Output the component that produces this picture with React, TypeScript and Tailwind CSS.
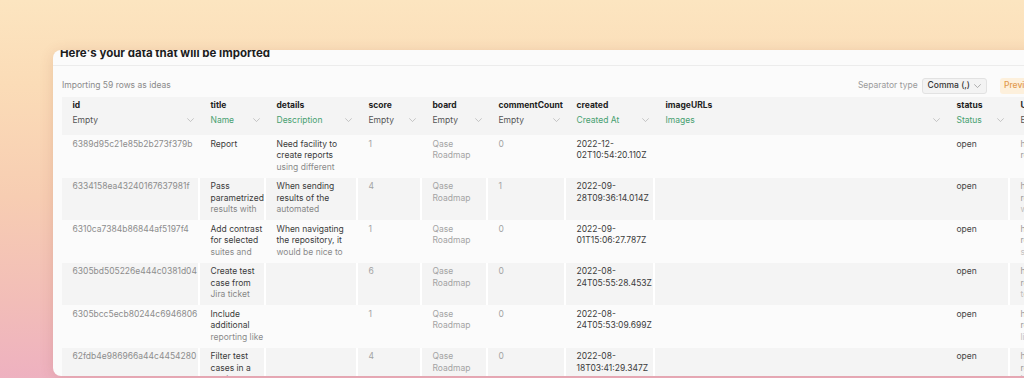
import { type ReactNode } from 'react'

type Column = {
  head: string
  value: string
  mapped: boolean
  width: string
  tone: string
  noSep?: boolean
}

const COLUMNS: Column[] = [
  { head: 'id', value: 'Empty', mapped: false, width: 'w-[138px]', tone: 'text-[#8d8d8d]' },
  { head: 'title', value: 'Name', mapped: true, width: 'w-[66px]', tone: 'text-[#3b3b3b]' },
  { head: 'details', value: 'Description', mapped: true, width: 'w-[92px]', tone: 'text-[#3b3b3b]' },
  { head: 'score', value: 'Empty', mapped: false, width: 'w-[64px]', tone: 'text-[#a3a3a3]' },
  { head: 'board', value: 'Empty', mapped: false, width: 'w-[66px]', tone: 'text-[#a3a3a3]' },
  { head: 'commentCount', value: 'Empty', mapped: false, width: 'w-[78px]', tone: 'text-[#a3a3a3]' },
  { head: 'created', value: 'Created At', mapped: true, width: 'w-[89px]', tone: 'text-[#3b3b3b]' },
  { head: 'imageURLs', value: 'Images', mapped: true, width: 'w-[291px]', tone: 'text-[#3b3b3b]', noSep: true },
  { head: 'status', value: 'Status', mapped: true, width: 'w-[64px]', tone: 'text-[#444444]' },
  { head: 'URL', value: 'Empty', mapped: false, width: 'w-[150px]', tone: 'text-[#9a9a9a]' },
]

// each cell is a list of visual lines
const ROWS: string[][][] = [
  [
    ['6389d95c21e85b2b273f379b'],
    ['Report'],
    ['Need facility to', 'create reports', 'using different'],
    ['1'],
    ['Qase', 'Roadmap'],
    ['0'],
    ['2022-12-', '02T10:54:20.110Z'],
    [],
    ['open'],
    ['https://qase.io/', 'roadmap/report'],
  ],
  [
    ['6334158ea43240167637981f'],
    ['Pass', 'parametrized', 'results with'],
    ['When sending', 'results of the', 'automated'],
    ['4'],
    ['Qase', 'Roadmap'],
    ['1'],
    ['2022-09-', '28T09:36:14.014Z'],
    [],
    ['open'],
    ['https://qase.io/', 'roadmap/pass-', 'with-values'],
  ],
  [
    ['6310ca7384b86844af5197f4'],
    ['Add contrast', 'for selected', 'suites and'],
    ['When navigating', 'the repository, it', 'would be nice to'],
    ['1'],
    ['Qase', 'Roadmap'],
    ['0'],
    ['2022-09-', '01T15:06:27.787Z'],
    [],
    ['open'],
    ['https://qase.io/', 'roadmap/add-', 'suites-and'],
  ],
  [
    ['6305bd505226e444c0381d04'],
    ['Create test', 'case from', 'Jira ticket'],
    [],
    ['6'],
    ['Qase', 'Roadmap'],
    ['0'],
    ['2022-08-', '24T05:55:28.453Z'],
    [],
    ['open'],
    ['https://qase.io/', 'roadmap/create-', 'test-case'],
  ],
  [
    ['6305bcc5ecb80244c6946806'],
    ['Include', 'additional', 'reporting like'],
    [],
    ['1'],
    ['Qase', 'Roadmap'],
    ['0'],
    ['2022-08-', '24T05:53:09.699Z'],
    [],
    ['open'],
    ['https://qase.io/', 'roadmap/include-', 'like-more'],
  ],
  [
    ['62fdb4e986966a44c4454280'],
    ['Filter test', 'cases in a', 'run by'],
    [],
    ['4'],
    ['Qase', 'Roadmap'],
    ['0'],
    ['2022-08-', '18T03:41:29.347Z'],
    [],
    ['open'],
    ['https://qase.io/', 'roadmap/filter-', 'by-status'],
  ],
]

function Chevron({ className = '' }: { className?: string }) {
  return (
    <svg viewBox="0 0 8 5" className={`h-[4.5px] w-[7px] shrink-0 ${className}`} fill="none" aria-hidden="true">
      <path d="M0.6 0.6L4 4L7.4 0.6" stroke="currentColor" strokeWidth="0.9" strokeLinecap="round" strokeLinejoin="round" />
    </svg>
  )
}

function HeaderCell({ col }: { col: Column }) {
  return (
    <div className={`${col.width} shrink-0 pt-[2.75px] pr-[6px] pl-[10.5px]`}>
      <p className="h-[11.5px] font-bold whitespace-nowrap text-[#222222]">{col.head}</p>
      <div className="mt-[3.5px] flex h-[11.5px] items-center justify-between">
        <span className={`whitespace-nowrap ${col.mapped ? 'text-[#47a071]' : 'text-[#555555]'}`}>{col.value}</span>
        <Chevron className="text-[#b8b8b8]" />
      </div>
    </div>
  )
}

function BodyCell({ col, lines, striped }: { col: Column; lines: string[]; striped: boolean }) {
  const sep = striped && !col.noSep ? 'border-white' : 'border-transparent'
  return (
    <div className={`${col.width} h-full shrink-0 overflow-hidden border-r-2 ${sep} pt-[3.5px] pr-[3px] pl-[10.5px] ${col.tone}`}>
      {lines.map((line, i) => (
        <p key={i} className={`whitespace-nowrap ${i === 2 ? 'opacity-60' : ''}`}>
          {line}
        </p>
      ))}
    </div>
  )
}

function Row({ cells, striped }: { cells: string[][]; striped: boolean }): ReactNode {
  return (
    <div className={`flex h-[42.6px] ${striped ? 'bg-[#f4f4f4]' : ''}`}>
      {COLUMNS.map((col, i) => (
        <BodyCell key={col.head} col={col} lines={cells[i]} striped={striped} />
      ))}
    </div>
  )
}

export default function App() {
  return (
    <div className="h-[378px] w-[1024px] overflow-hidden bg-[linear-gradient(180deg,#fce5c0_0%,#fbdcb7_22%,#f7cdb2_52%,#f2bdb8_80%,#eeb1c0_100%)] pt-[50px] pl-[53px] font-['Inter','Noto_Sans',sans-serif]">
      <div className="h-[326px] w-[1120px] overflow-hidden rounded-lg bg-[#fbfbfb] shadow-[0_2px_14px_rgba(140,70,50,0.16)]">
        <div className="flex h-[15.5px] items-start border-b border-[#ececec] pl-[7px]">
          <h2 className="-mt-[5px] text-[11.5px] leading-[16px] font-bold whitespace-nowrap text-[#1d1d1d]">
            Here's your data that will be imported
          </h2>
        </div>

        <div className="pt-[12.5px] pl-[9px] text-[8.5px] leading-[11.5px]">
          <div className="flex h-[16px] w-[998px] items-center">
            <span className="text-[#8a8a8a]">Importing 59 rows as ideas</span>
            <div className="ml-auto flex items-center">
              <span className="text-[#9a9a9a]">Separator type</span>
              <div className="ml-[4px] flex h-[15.5px] items-center gap-[4px] rounded-[3px] border border-[#e2e2e2] bg-[#f3f3f3] pr-[5px] pl-[5px]">
                <span className="font-medium whitespace-nowrap text-[#333333]">Comma (,)</span>
                <Chevron className="text-[#9a9a9a]" />
              </div>
              <button
                type="button"
                className="ml-[13px] flex h-[15.5px] w-[60px] items-center rounded-[3px] bg-[#fdf0dc] pl-[4px] font-medium whitespace-nowrap text-[#e29a4f]"
              >
                Preview
              </button>
            </div>
          </div>

          <div className="mt-[3px]">
            <div className="flex h-[38px] bg-[#f4f4f4]">
              {COLUMNS.map((col) => (
                <HeaderCell key={col.head} col={col} />
              ))}
            </div>
            {ROWS.map((cells, i) => (
              <Row key={cells[0][0]} cells={cells} striped={i % 2 === 1} />
            ))}
          </div>
        </div>
      </div>
    </div>
  )
}
